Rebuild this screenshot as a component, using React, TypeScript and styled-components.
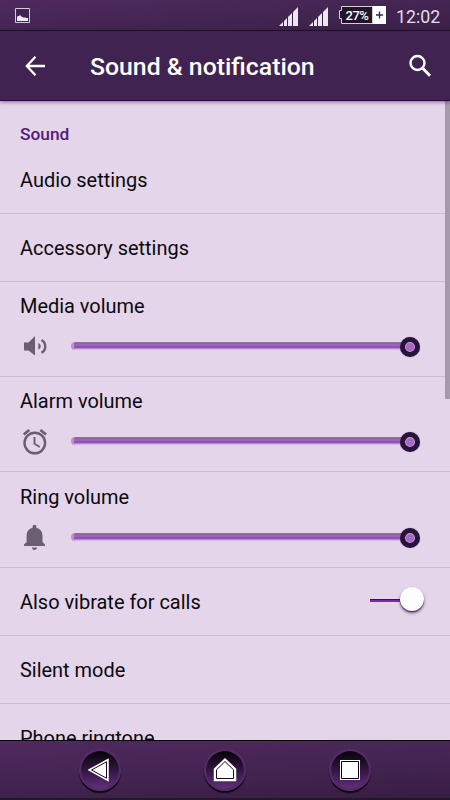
import React from 'react';
import styled, { createGlobalStyle } from 'styled-components';

const GlobalStyle = createGlobalStyle`
  * { box-sizing: border-box; }
  body { margin: 0; background: #e4d5eb; font-family: Roboto, "Liberation Sans", sans-serif; }
`;

const Screen = styled.div`
  width: 450px;
  height: 800px;
  display: flex;
  flex-direction: column;
  overflow: hidden;
`;

const StatusBar = styled.header`
  flex: 0 0 31px;
  display: flex;
  align-items: flex-start;
  padding: 8px 8px 0 15px;
  border-bottom: 1px solid #1d1025;
  background: linear-gradient(176deg, #50295f 0%, #472757 35%, #3a2047 100%);
`;

const StatusIcons = styled.div`
  margin-left: auto;
  display: flex;
  align-items: flex-start;
  svg { display: block; }
`;

const Signal = styled.svg`
  margin: -1px 11px 0 0;
`;

const Battery = styled.div`
  display: flex;
  width: 48px;
  height: 18px;
  margin: -2px 0 0 -1px;
`;

const BatteryCap = styled.svg`
  flex: none;
  margin-right: -1px;
`;

const BatteryLevel = styled.div`
  width: 31px;
  height: 18px;
  border: 1px solid #d5cdd9;
  border-left: 0;
  background: #21152a;
  color: #fff;
  font: 500 13px/17px Roboto, sans-serif;
  text-align: center;
  letter-spacing: -0.5px;
  white-space: nowrap;
`;

const BatteryPlus = styled.svg`
  flex: none;
`;

const Clock = styled.time`
  margin-left: 10px;
  width: 46px;
  color: #e4dce8;
  font-size: 17.8px;
  line-height: 18px;
  white-space: nowrap;
`;

const AppBar = styled.div`
  flex: 0 0 70px;
  display: flex;
  align-items: center;
  padding: 1px 18px 0 23px;
  background: #412352;
  border-bottom: 1px solid #2b0747;
  box-shadow: 0 1px 4px rgba(40, 15, 55, 0.55);
  z-index: 1;
`;

const Title = styled.h1`
  flex: 1;
  margin: 2px 0 0 43px;
  color: #fff;
  font-size: 24.8px;
  line-height: 30px;
  font-weight: 500;
  white-space: nowrap;
`;

const Content = styled.main`
  position: relative;
  flex: 0 0 639px;
  overflow: hidden;
  background: #e4d5eb;
`;

const Scrollbar = styled.div`
  position: absolute;
  top: 0;
  right: 0;
  width: 5px;
  height: 298px;
  background: #a599ab;
`;

const SectionTitle = styled.h2`
  margin: 0;
  height: 45px;
  padding: 23px 20px 0;
  color: #551b7b;
  font-size: 17.3px;
  line-height: 20px;
  font-weight: 500;
`;

const Row = styled.div<{ $height: number }>`
  height: ${p => p.$height}px;
  display: flex;
  align-items: center;
  justify-content: space-between;
  padding: 1px 20px 0;
  border-bottom: 1px solid #c8bbcf;
`;

const Label = styled.span`
  color: #0b090c;
  font-size: 19.95px;
  line-height: 24px;
  white-space: nowrap;
`;

const VolumeRow = styled.div<{ $height: number; $top: number }>`
  height: ${p => p.$height}px;
  padding: ${p => p.$top}px 20px 0;
  border-bottom: 1px solid #c8bbcf;
  display: flex;
  flex-direction: column;
`;

const VolumeControl = styled.div`
  display: flex;
  align-items: center;
  margin-top: 13px;
  height: 30px;
`;

const IconSlot = styled.div`
  width: 51px;
  height: 30px;
  flex: none;
  svg { display: block; }
`;

const Track = styled.div`
  width: 348px;
  height: 8px;
  display: flex;
  align-items: center;
  border-radius: 4px;
  border-left: 3px solid #b795c8;
  background: linear-gradient(#8c7596 0 1px, #89639d 1px 2px, #a063bd 2px 4px, #9250b3 4px 6px, #b58ccb 6px 7px, #d2b9de 7px);
`;

const Thumb = styled.div`
  flex: none;
  width: 20px;
  height: 20px;
  margin-left: 326px;
  margin-top: 1px;
  border-radius: 50%;
  border: 5px solid #281438;
  background: #a768c5;
  box-shadow: inset 0 0 0 1px #c9a9dc, 0 0 1px #8e50ae;
`;

const Switch = styled.div`
  width: 55px;
  height: 26px;
  margin-top: -6px;
  margin-right: 5px;
  display: flex;
  align-items: center;
`;

const SwitchLine = styled.div`
  width: 31px;
  height: 3px;
  margin-top: 3px;
  border-top: 1px solid #351744;
  background: #792ca5;
`;

const SwitchThumb = styled.div`
  width: 24px;
  height: 24px;
  margin-left: -1px;
  border-radius: 50%;
  background: #fdfcfe;
  box-shadow: 0 1px 0 #523064, 0 2px 3px rgba(50, 25, 65, 0.7);
`;

const NavBar = styled.nav`
  flex: 0 0 60px;
  display: flex;
  padding: 8px 79px 0 79px;
  justify-content: space-between;
  border-top: 1px solid #08040b;
  border-bottom: 2px solid #24162c;
  background: linear-gradient(177deg, #50295f 0%, #432451 55%, #371d43 100%);
`;

const NavButton = styled.div`
  width: 42px;
  height: 42px;
  border-radius: 50%;
  border: 2px solid #562c68;
  background: linear-gradient(#09040c 5%, #291235 40%, #4b2261 75%, #613078 100%);
  background-clip: padding-box;
  box-shadow: 0 2px 1px #0d0612;
  display: flex;
  align-items: center;
  justify-content: center;
  svg { display: block; }
`;

function SignalIcon() {
  return (
    <Signal width="19" height="19" viewBox="0 0 19 19" fill="#ebe6ee">
      <path d="M0 19 4 15v4zM5 19v-5l3-3v8zM9 19v-9l4-4v13zM14 19V5l5-5v19z" />
      <path d="M4.500 14v5M8.500 10v9M13.500 5v14" stroke="#3a2047" />
    </Signal>
  );
}

function SpeakerIcon() {
  return (
    <svg width="30" height="30" viewBox="0 0 30 30" fill="#6b5e72">
      <path d="M4 11.500h4.500L15 5v19.500l-6.500-5H4z" />
      <path d="M18.300 12v6.600c1.500-.7 2.400-1.800 2.400-3.300s-.9-2.600-2.400-3.300z" />
      <path d="M21.500 9c5 2.800 5 10 0 12.800" fill="none" stroke="#6b5e72" strokeWidth="2.400" />
    </svg>
  );
}

function AlarmIcon() {
  return (
    <svg width="30" height="30" viewBox="0 0 30 30" fill="none" stroke="#6b5e72" strokeWidth="2.400">
      <circle cx="14.800" cy="17" r="10.300" />
      <path d="M3.700 8.500 9.300 4M20.300 4l5.800 4.500" strokeWidth="2.700" />
      <path d="M14.500 11v6.800l5.300 3.200" strokeWidth="1.900" />
    </svg>
  );
}

function BellIcon() {
  return (
    <svg width="30" height="30" viewBox="0 0 30 30" fill="#6b5e72">
      <path d="M12 25.500h5c0 1.500-1.100 2.500-2.500 2.500S12 27 12 25.500zM22.500 20v-6.400c0-4-2.500-7.100-6.100-7.900v-.9c0-1.200-.8-2-1.900-2s-1.900.8-1.900 2v.9c-3.600.8-6 3.900-6 7.900V20L4 22.500v1.600h21v-1.600z" />
    </svg>
  );
}

interface VolumeProps {
  label: string;
  height: number;
  top: number;
  children: React.ReactNode;
}

function Volume({ label, height, top, children }: VolumeProps) {
  return (
    <VolumeRow $height={height} $top={top}>
      <Label>{label}</Label>
      <VolumeControl>
        <IconSlot>{children}</IconSlot>
        <Track><Thumb /></Track>
      </VolumeControl>
    </VolumeRow>
  );
}

export default function App() {
  return (
    <Screen>
      <GlobalStyle />
      <StatusBar>
        <svg width="15" height="15" viewBox="0 0 15 15">
          <path d="M.5.5h14v14H.5z" fill="#402350" stroke="#d4c9da" />
          <path d="M2 13V9l1-1 1 0 1-1 2 2h1l1 1 1-1 1 1 2 0v3z" fill="#eee8f1" />
        </svg>
        <StatusIcons>
          <SignalIcon />
          <SignalIcon />
          <Battery>
            <BatteryCap width="5" height="18" viewBox="0 0 5 18">
              <path d="M5 .5H3.500V4.500H1.500v8h2v5H5" fill="#21152a" stroke="#d5cdd9" />
            </BatteryCap>
            <BatteryLevel>27%</BatteryLevel>
            <BatteryPlus width="13" height="18" viewBox="0 0 13 18">
              <path d="M0 0h13v18H0z" fill="#fff" />
              <path d="M3 9h7M6.500 5.500v7" stroke="#37204a" strokeWidth="1.300" />
            </BatteryPlus>
          </Battery>
          <Clock>12:02</Clock>
        </StatusIcons>
      </StatusBar>
      <AppBar>
        <svg width="24" height="24" viewBox="0 0 24 24" fill="none" stroke="#fff" strokeWidth="2.300">
          <path d="M12.500 2.800 3.800 12l8.700 9.200M3.300 12H22" />
        </svg>
        <Title>Sound &amp; notification</Title>
        <svg width="24" height="24" viewBox="0 0 24 24" fill="none" stroke="#fff">
          <circle cx="9.500" cy="9" r="7" strokeWidth="2.400" />
          <path d="m14.700 14.200 7.300 7.500" strokeWidth="3" />
        </svg>
      </AppBar>
      <Content>
        <SectionTitle>Sound</SectionTitle>
        <Row $height={68}><Label>Audio settings</Label></Row>
        <Row $height={68}><Label>Accessory settings</Label></Row>
        <Volume label="Media volume" height={95} top={12}><SpeakerIcon /></Volume>
        <Volume label="Alarm volume" height={95} top={12}><AlarmIcon /></Volume>
        <Volume label="Ring volume" height={96} top={13}><BellIcon /></Volume>
        <Row $height={68}>
          <Label>Also vibrate for calls</Label>
          <Switch><SwitchLine /><SwitchThumb /></Switch>
        </Row>
        <Row $height={68}><Label>Silent mode</Label></Row>
        <Row $height={68}><Label>Phone ringtone</Label></Row>
        <Scrollbar />
      </Content>
      <NavBar>
        <NavButton>
          <svg width="24" height="26" viewBox="0 0 24 26">
            <path d="M1 13 20 2.500v21z" fill="#fff" stroke="#fff" strokeWidth="1.500" />
            <path d="M3.500 13 18.500 4.800v16.400z" fill="#fff" stroke="#160820" />
          </svg>
        </NavButton>
        <NavButton>
          <svg width="24" height="26" viewBox="0 0 24 26">
            <path d="M1.500 23.500V12L12 2l10.500 10v11.500z" fill="#fff" stroke="#fff" strokeWidth="1.500" />
            <path d="M3.500 21.500v-8.700L12 4.500l8.500 8.300v8.700z" fill="#fff" stroke="#160820" />
          </svg>
        </NavButton>
        <NavButton>
          <svg width="20" height="20" viewBox="0 0 20 20">
            <path d="M0 0h20v20H0z" fill="#fff" />
            <path d="M1.500 1.500h17v17h-17z" fill="#fff" stroke="#050208" />
          </svg>
        </NavButton>
      </NavBar>
    </Screen>
  );
}
